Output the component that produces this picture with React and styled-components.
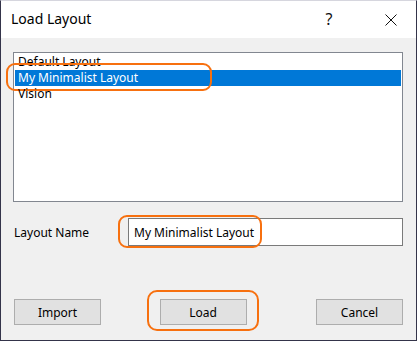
import React from 'react';
import styled, { createGlobalStyle } from 'styled-components';

const GlobalStyle = createGlobalStyle`
  html, body {
    margin: 0;
    padding: 0;
    background: #ffffff;
  }
  body {
    font-family: "Segoe UI", "Noto Sans", "DejaVu Sans", sans-serif;
  }
`;

const Window = styled.div`
  width: 417px;
  height: 341px;
  box-sizing: border-box;
  border: 1px solid #34344a;
  border-top-color: #d6d6de;
  background: #f0f0f0;
  display: flex;
  flex-direction: column;
`;

const TitleBar = styled.div`
  height: 37px;
  flex: none;
  background: #ffffff;
  display: flex;
  align-items: center;
  padding-left: 10px;
`;

const Title = styled.div`
  flex: 1;
  font-size: 14px;
  color: #000;
  padding-bottom: 2px;
`;

const HelpGlyph = styled.div`
  width: 22px;
  text-align: center;
  font-size: 16px;
  color: #111;
  margin-right: 28px;
  padding-bottom: 2px;
`;

const CloseButton = styled.div`
  width: 46px;
  height: 37px;
  display: flex;
  align-items: center;
  justify-content: center;
  margin-right: 2px;
`;

const Body = styled.div`
  flex: 1;
  display: flex;
  flex-direction: column;
  padding: 14px 13px 0 12px;
  font-size: 12px;
  color: #000;
`;

const ListBox = styled.div`
  width: 390px;
  height: 150px;
  box-sizing: border-box;
  border: 1px solid #828790;
  background: #ffffff;
  padding: 1px 1px;
`;

const ListItem = styled.div`
  position: relative;
  height: 16px;
  line-height: 15px;
  padding-left: 3px;
  background: ${(p) => (p.$selected ? '#0078d7' : 'transparent')};
  color: ${(p) => (p.$selected ? '#ffffff' : '#000000')};
  white-space: nowrap;
`;

const Ring = styled.div`
  position: absolute;
  box-sizing: border-box;
  border: 2px solid #f7700f;
  border-radius: ${(p) => p.$radius || 9}px;
  pointer-events: none;
`;

const NameRow = styled.div`
  display: flex;
  align-items: center;
  margin-top: 16px;
`;

const Label = styled.div`
  width: 116px;
  padding-left: 1px;
`;

const InputWrap = styled.div`
  position: relative;
`;

const TextBox = styled.div`
  width: 275px;
  height: 28px;
  box-sizing: border-box;
  border: 1px solid #7a7a7a;
  background: #ffffff;
  padding-left: 5px;
  display: flex;
  align-items: center;
  white-space: nowrap;
`;

const ButtonRow = styled.div`
  display: flex;
  justify-content: space-between;
  margin-top: 53px;
  padding-left: 1px;
`;

const ButtonWrap = styled.div`
  position: relative;
  margin-right: ${(p) => p.$shift || 0}px;
`;

const Button = styled.div`
  width: 87px;
  height: 26px;
  box-sizing: border-box;
  border: 1px solid #adadad;
  background: #e1e1e1;
  display: flex;
  align-items: center;
  justify-content: center;
`;

const items = ['Default Layout', 'My Minimalist Layout', 'Vision'];

export default function App() {
  return (
    <>
      <GlobalStyle />
      <Window>
        <TitleBar>
          <Title>Load Layout</Title>
          <HelpGlyph>?</HelpGlyph>
          <CloseButton>
            <svg width="12" height="12" viewBox="0 0 12 12">
              <path d="M0.5 0.5 L11.5 11.5 M11.5 0.5 L0.5 11.5" stroke="#111" strokeWidth="1" fill="none" />
            </svg>
          </CloseButton>
        </TitleBar>
        <Body>
          <ListBox>
            {items.map((name, i) => (
              <ListItem key={name} $selected={i === 1}>
                {name}
                {i === 1 && (
                  <Ring style={{ left: -9, top: -7, width: 206, height: 28 }} />
                )}
              </ListItem>
            ))}
          </ListBox>
          <NameRow>
            <Label>Layout Name</Label>
            <InputWrap>
              <TextBox>My Minimalist Layout</TextBox>
              <Ring style={{ left: -10, top: -3, width: 144, height: 33 }} />
            </InputWrap>
          </NameRow>
          <ButtonRow>
            <Button>Import</Button>
            <ButtonWrap $shift={11}>
              <Button>Load</Button>
              <Ring $radius={10} style={{ left: -13, top: -9, width: 112, height: 41 }} />
            </ButtonWrap>
            <Button>Cancel</Button>
          </ButtonRow>
        </Body>
      </Window>
    </>
  );
}
